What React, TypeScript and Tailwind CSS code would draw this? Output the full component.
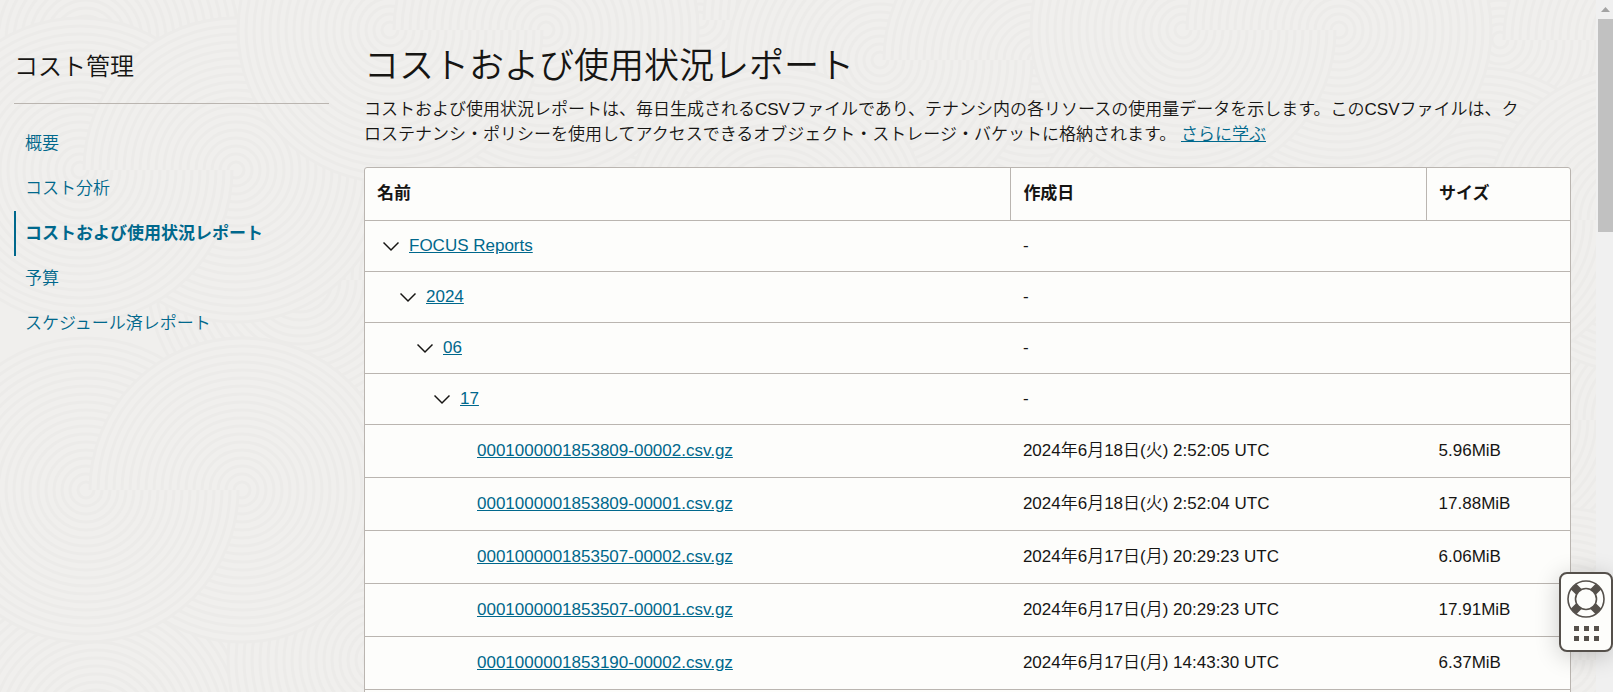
type TFolder = {
  name: string;
  level: string;
};

type TReport = {
  name: string;
  created: string;
  size: string;
};

const navItems = ['概要', 'コスト分析', 'コストおよび使用状況レポート', '予算', 'スケジュール済レポート'];
const activeItem = 'コストおよび使用状況レポート';

const folders: TFolder[] = [
  { name: 'FOCUS Reports', level: 'pl-[18px]' },
  { name: '2024', level: 'pl-[35px]' },
  { name: '06', level: 'pl-[52px]' },
  { name: '17', level: 'pl-[69px]' },
];

const reports: TReport[] = [
  { name: '0001000001853809-00002.csv.gz', created: '2024年6月18日(火) 2:52:05 UTC', size: '5.96MiB' },
  { name: '0001000001853809-00001.csv.gz', created: '2024年6月18日(火) 2:52:04 UTC', size: '17.88MiB' },
  { name: '0001000001853507-00002.csv.gz', created: '2024年6月17日(月) 20:29:23 UTC', size: '6.06MiB' },
  { name: '0001000001853507-00001.csv.gz', created: '2024年6月17日(月) 20:29:23 UTC', size: '17.91MiB' },
  { name: '0001000001853190-00002.csv.gz', created: '2024年6月17日(月) 14:43:30 UTC', size: '6.37MiB' },
];

const RADIUS = 152;
const SPREAD = 156;
const rings = Array.from({ length: 19 }, (_, i) => (i + 1) * 8);

// left centre of each swirl, later ones cover earlier ones
const swirls = [
  [-60, 730],
  [380, 660],
  [1500, 420],
  [1560, 660],
  [-70, 40],
  [700, 20],
  [880, 60],
  [1500, 40],
  [300, 280],
  [620, 220],
  [1180, 240],
  [1480, 220],
  [80, 170],
  [390, 30],
  [1183, 30],
  [86, 490],
];

const Disc = ({ cx, cy }: { cx: number; cy: number }) => (
  <g transform={`translate(${cx} ${cy})`}>
    <circle r={RADIUS} fill="#f0efed" />
    {rings.map((r) => (
      <circle key={r} r={r} fill="none" stroke="#ecebe9" strokeWidth="3" />
    ))}
  </g>
);

// upper half of a disc, links it with its left neighbour into an S
const HalfDisc = ({ cx, cy }: { cx: number; cy: number }) => (
  <g transform={`translate(${cx} ${cy})`}>
    <path d={`M${-RADIUS} 0A${RADIUS} ${RADIUS} 0 0 1 ${RADIUS} 0z`} fill="#f0efed" />
    {rings.map((r) => (
      <path key={r} d={`M${-r} 0A${r} ${r} 0 0 1 ${r} 0`} fill="none" stroke="#ecebe9" strokeWidth="3" />
    ))}
  </g>
);

const Backdrop = () => (
  <svg className="absolute inset-0 h-full w-full" aria-hidden="true">
    {swirls.map(([x, y]) => (
      <g key={`${x}-${y}`}>
        <Disc cx={x + SPREAD} cy={y} />
        <Disc cx={x} cy={y} />
        <HalfDisc cx={x + SPREAD} cy={y} />
      </g>
    ))}
  </svg>
);

const Sidebar = () => {
  return (
    <aside className="w-[315px] shrink-0 pt-[49px]">
      <h2 className="border-b border-[#bab5b0] pb-[19px] text-[24px] leading-[35px]">コスト管理</h2>
      <nav className="pt-[17px]">
        {navItems.map((item) => (
          <a
            key={item}
            href="#"
            className={
              item === activeItem
                ? 'block border-l-2 border-[#00688c] pl-[9px] text-[17px] leading-[45px] font-bold text-[#00688c]'
                : 'block border-l-2 border-transparent pl-[9px] text-[17px] leading-[45px] text-[#00688c]'
            }
          >
            {item}
          </a>
        ))}
      </nav>
    </aside>
  );
};

const ReportTable = () => {
  return (
    <div className="overflow-hidden rounded-[3px] border border-[#bab5b0] bg-[#fdfdfb]">
      <table className="w-full table-fixed border-collapse text-left text-[17px]">
        <thead>
          <tr className="h-[52px] border-b border-[#bab5b0]">
            <th className="w-[53.6%] border-r border-[#bab5b0] px-3 font-bold">名前</th>
            <th className="w-[34.5%] border-r border-[#bab5b0] px-3 font-bold">作成日</th>
            <th className="px-3 font-bold">サイズ</th>
          </tr>
        </thead>
        <tbody>
          {folders.map(({ name, level }) => (
            <tr key={name} className="h-[51px] border-b border-[#bab5b0]">
              <td className={level}>
                <div className="flex items-center gap-[10px]">
                  <button type="button" aria-label={`${name} を閉じる`} className="h-4 w-4">
                    <svg viewBox="0 0 16 16" className="h-4 w-4" fill="none" stroke="#161513" strokeWidth="1.5">
                      <path d="M0.5 4.5 8 12 15.5 4.5" />
                    </svg>
                  </button>
                  <a href="#" className="text-[#00688c] underline">{name}</a>
                </div>
              </td>
              <td className="px-3">-</td>
              <td />
            </tr>
          ))}
          {reports.map(({ name, created, size }) => (
            <tr key={name} className="h-[53px] border-b border-[#bab5b0]">
              <td className="pl-[112px]">
                <a href="#" className="text-[#00688c] underline">{name}</a>
              </td>
              <td className="px-3">{created}</td>
              <td className="px-3">{size}</td>
            </tr>
          ))}
          <tr className="h-[53px]">
            <td colSpan={3} />
          </tr>
        </tbody>
      </table>
    </div>
  );
};

const Scrollbar = () => (
  <div className="flex w-[17px] shrink-0 flex-col bg-[#f0f0f0] pl-[2px]" aria-hidden="true">
    <div className="flex h-[19px] items-center justify-center">
      <svg width="9" height="5" viewBox="0 0 9 5" fill="#a3a3a3">
        <path d="M4.5 0 9 5H0z" />
      </svg>
    </div>
    <div className="h-[213px] bg-[#c1c1c1]" />
  </div>
);

const HelpWidget = () => (
  <button
    type="button"
    aria-label="ヘルプ"
    className="fixed right-0 bottom-[40px] flex h-[80px] w-[54px] flex-col items-center gap-2 rounded-lg border-2 border-[#55504b] bg-[#fdfdfb] pt-[6px] shadow-[0_4px_24px_rgba(0,0,0,0.2)]"
  >
    <svg width="38" height="38" viewBox="0 0 38 38" fill="none" stroke="#55504b">
      <g strokeWidth="8">
        <path d="M6.5 6.5 12 12M31.5 6.5 26 12M6.5 31.5 12 26M31.5 31.5 26 26" />
      </g>
      <circle cx="19" cy="19" r="18" strokeWidth="1.6" />
      <circle cx="19" cy="19" r="10.5" strokeWidth="1.6" fill="#fdfdfb" />
    </svg>
    <svg width="25" height="15" viewBox="0 0 25 15" fill="#55504b">
      <path d="M0 0h5v5H0zM10 0h5v5h-5zM20 0h5v5h-5zM0 10h5v5H0zM10 10h5v5h-5zM20 10h5v5h-5z" />
    </svg>
  </button>
);

const App = () => {
  return (
    <div
      lang="ja"
      className="flex h-screen overflow-hidden bg-[#f0efed] font-['Liberation_Sans','Noto_Sans_CJK_JP',sans-serif] font-[350] text-[#161513]"
    >
      <div className="relative min-w-0 flex-1 overflow-hidden">
        <Backdrop />
        <div className="relative flex gap-[35px] pr-[25px] pl-[14px]">
          <Sidebar />
          <main className="min-w-0 flex-1 pt-[41px]">
            <h1 className="text-[35px] leading-[50px]">コストおよび使用状況レポート</h1>
            <p className="mt-[6px] mb-5 pr-[50px] text-[17px] leading-[25px]">
              コストおよび使用状況レポートは、毎日生成されるCSVファイルであり、テナンシ内の各リソースの使用量データを示します。このCSVファイルは、クロステナンシ・ポリシーを使用してアクセスできるオブジェクト・ストレージ・バケットに格納されます。{' '}
              <a href="#" className="text-[#00688c] underline">さらに学ぶ</a>
            </p>
            <ReportTable />
          </main>
        </div>
      </div>
      <Scrollbar />
      <HelpWidget />
    </div>
  );
};

export default App;
